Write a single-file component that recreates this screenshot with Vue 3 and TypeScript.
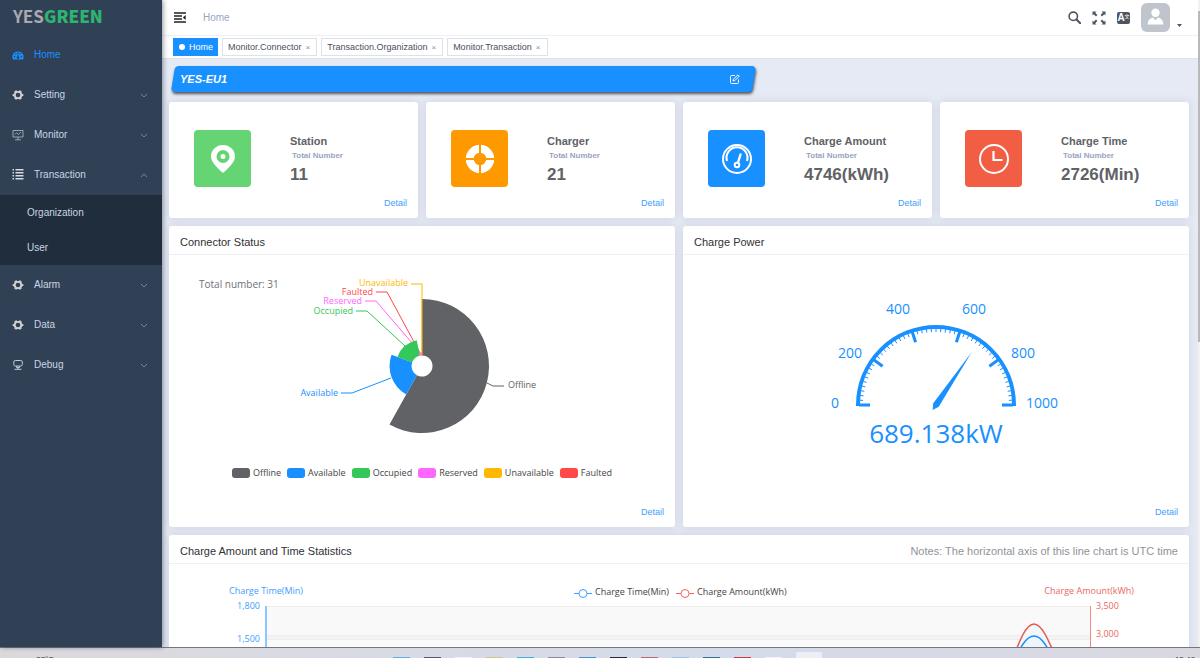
<script setup lang="ts">
import { computed, ref } from 'vue'

interface MenuItem { label: string; icon: string; open?: boolean; children?: string[] }
interface Slice { name: string; value: number; color: string; line: string; x: number; y: number; anchor: 'start' | 'end' }

const menu = ref<MenuItem[]>([
  { label: 'Setting', icon: 'gear' },
  { label: 'Monitor', icon: 'monitor' },
  { label: 'Transaction', icon: 'list', open: true, children: ['Organization', 'User'] },
  { label: 'Alarm', icon: 'gear' },
  { label: 'Data', icon: 'gear' },
  { label: 'Debug', icon: 'debug' },
])

const tags = ['Monitor.Connector', 'Transaction.Organization', 'Monitor.Transaction']

const stats = [
  { title: 'Station', value: '11', icon: 'pin' },
  { title: 'Charger', value: '21', icon: 'ring' },
  { title: 'Charge Amount', value: '4746(kWh)', icon: 'meter' },
  { title: 'Charge Time', value: '2726(Min)', icon: 'clock' },
]

const slices: Slice[] = [
  { name: 'Offline', value: 18, color: '#606266', line: '318,128 324,131 335,131', x: 339, y: 133, anchor: 'start' },
  { name: 'Available', value: 7, color: '#1890ff', line: '172,138 183,138 222,123', x: 169, y: 141, anchor: 'end' },
  { name: 'Occupied', value: 5, color: '#34c759', line: '187,56 198,56 236,91', x: 184, y: 59, anchor: 'end' },
  { name: 'Reserved', value: 1, color: '#ff66ff', line: '196,46 207,46 250,96', x: 193, y: 49, anchor: 'end' },
  { name: 'Unavailable', value: 0, color: '#ffb800', line: '242,29 253,29 253,100', x: 239, y: 31, anchor: 'end' },
  { name: 'Faulted', value: 0, color: '#ff4848', line: '207,37 218,37 251,98', x: 204, y: 40, anchor: 'end' },
]
const total = slices.reduce((sum, s) => sum + s.value, 0)

const pie = computed(() => {
  const cx = 253, cy = 111, inner = 10.5, outer = 67
  const max = Math.max(...slices.map(s => s.value))
  let start = 0
  const point = (r: number, a: number) => `${(cx + r * Math.sin(a)).toFixed(2)} ${(cy - r * Math.cos(a)).toFixed(2)}`
  return slices.filter(s => s.value > 0).map(s => {
    const end = start + (s.value / total) * Math.PI * 2
    const r = inner + (outer - inner) * (s.value / max)
    const large = end - start > Math.PI ? 1 : 0
    const d = `M${point(inner, start)} L${point(r, start)} A${r} ${r} 0 ${large} 1 ${point(r, end)} L${point(inner, end)} A${inner} ${inner} 0 ${large} 0 ${point(inner, start)}Z`
    start = end
    return { name: s.name, color: s.color, d }
  })
})

const ticks = computed(() => Array.from({ length: 51 }, (_, i) => {
  const a = Math.PI * (1 - i / 50)
  const major = i % 10 === 0
  const from = 77, to = major ? 66 : 73
  return {
    major,
    x1: 253 + from * Math.cos(a), y1: 150 - from * Math.sin(a),
    x2: 253 + to * Math.cos(a), y2: 150 - to * Math.sin(a),
  }
}))
const gaugeLabels = [
  { t: '0', x: 152, y: 153 }, { t: '200', x: 167, y: 103 }, { t: '400', x: 215, y: 59 },
  { t: '600', x: 291, y: 59 }, { t: '800', x: 340, y: 103 }, { t: '1000', x: 359, y: 153 },
]
const power = 689.138
const needleAngle = computed(() => (power / 1000) * 180 - 90)

const taskIcons = ['#5fb0e6', '#5a5a60', '#f0f0f5', '#d8c08c', '#3fb6d2', '#8b8d93', '#3f97d6', '#26282e', '#c9606e', '#9cc3ee', '#2f6f9f', '#cf3a34', '#f4f4f6']
</script>

<template>
  <div class="screen">
    <div class="app">
      <aside class="sidebar">
        <div class="logo"><span>YES</span><b>GREEN</b></div>
        <nav>
          <a href="#" class="item active">
            <svg class="ico" viewBox="0 0 12 12"><path d="M1 10.5A5.6 5.6 0 1 1 11 10.5Z" fill="currentColor" /><g fill="#304156"><circle cx="2.6" cy="7.6" r=".8" /><circle cx="3.8" cy="4.7" r=".8" /><circle cx="8.2" cy="4.7" r=".8" /><circle cx="9.4" cy="7.6" r=".8" /><path d="M5.6 3h.8v4.2a1.3 1.3 0 1 1-.8 0Z" /></g></svg>
            <span class="label">Home</span>
          </a>
          <template v-for="m in menu" :key="m.label">
            <button type="button" class="item" :aria-expanded="!!m.open" @click="m.open = !m.open">
              <svg v-if="m.icon === 'gear'" class="ico" viewBox="0 0 12 12"><path d="M4.2 1.3 5.2 2h1.6l1-.7 1.8 1-.1 1.3.8 1.3 1.2.5v1.3l-1.2.5-.8 1.3.1 1.3-1.8 1-1-.7H5.2l-1 .7-1.8-1 .1-1.3-.8-1.3L.5 6.7V5.4l1.2-.5.8-1.3-.1-1.3Z" fill="#cfcfcf" /><circle cx="6" cy="6" r="2.3" fill="#304156" /></svg>
              <svg v-else-if="m.icon === 'monitor'" class="ico" viewBox="0 0 12 12" fill="none" stroke="#b4bccb" stroke-width=".8"><path d="M1 1.500h10v6.500H1ZM6 8v2.500M3 10.800h6M3 5.500l1.700-1.700L6.400 5.500 9 3" /></svg>
              <svg v-else-if="m.icon === 'list'" class="ico" viewBox="0 0 12 12" fill="#d5dae3"><path d="M3.500 0h8v1.500h-8zM3.500 3h8v1.500h-8zM3.500 6h8v1.500h-8zM3.500 9h8v1.500h-8zM.5 0H2v1.500H.5zM.5 3H2v1.500H.5zM.5 6H2v1.500H.5zM.5 9H2v1.500H.5z" /></svg>
              <svg v-else class="ico" viewBox="0 0 12 12" fill="none" stroke="#bfcbd9"><rect x="1.800" y="1.500" width="8.500" height="5.500" rx="1.500" /><path d="M4.500 7v1.500h3V7M6 8v2M2.500 10.300h7" /></svg>
              <span class="label">{{ m.label }}</span>
              <svg class="chev" :class="{ up: m.open }" viewBox="0 0 8 5"><path d="m1 1 3 3 3-3" fill="none" stroke="#7f8b9b" stroke-width=".9" /></svg>
            </button>
            <div v-if="m.open && m.children" class="sub">
              <a v-for="c in m.children" :key="c" href="#">{{ c }}</a>
            </div>
          </template>
        </nav>
      </aside>

      <div class="main">
        <header class="topbar">
          <button type="button" class="plain" aria-label="Collapse menu">
            <svg width="12" height="11" viewBox="0 0 12 11" stroke="#222" stroke-width="1.300"><path d="M0 1h12M0 4h8M0 7h8M0 10h12" /><path d="M11.700 3v5L8.800 5.500Z" fill="#222" stroke="none" /></svg>
          </button>
          <span class="crumb">Home</span>
          <div class="tools">
            <button type="button" class="plain" aria-label="Search">
              <svg width="13" height="13" viewBox="0 0 13 13" fill="none" stroke="#4d5462"><circle cx="5.300" cy="5.300" r="4.200" stroke-width="1.600" /><path d="m8.500 8.500 3.700 3.700" stroke-width="2" stroke-linecap="round" /></svg>
            </button>
            <button type="button" class="plain" aria-label="Full screen">
              <svg width="14" height="14" viewBox="0 0 14 14"><path d="M.5.500h4L3.200 1.800l2.200 2.200-1.400 1.400L1.800 3.200.500 4.500zM13.500.500v4L12.200 3.200 10 5.400 8.600 4l2.200-2.200L9.500.500zM.500 13.500v-4l1.300 1.300L4 8.600 5.400 10l-2.200 2.200 1.300 1.300zM13.500 13.500h-4l1.300-1.300L8.600 10 10 8.600l2.200 2.200 1.300-1.300z" fill="#4d5462" /></svg>
            </button>
            <button type="button" class="plain lang" aria-label="Language">A<sup>文</sup></button>
            <button type="button" class="plain user" aria-label="Account">
              <svg width="29" height="29" viewBox="0 0 29 29"><rect width="29" height="29" rx="6" fill="#c0c4cc" /><circle cx="14.500" cy="9.800" r="4.200" fill="#fff" /><path d="M6.500 21.500c.3-4 2.400-6.500 5.500-7l2.500 3 2.500-3c3.100.5 5.200 3 5.500 7Z" fill="#fff" /></svg>
              <svg class="caret" width="5" height="3" viewBox="0 0 5 3"><path d="M0 0h5L2.500 3Z" fill="#4d5462" /></svg>
            </button>
          </div>
        </header>

        <nav class="tags">
          <a href="#" class="tag on"><i></i>Home</a>
          <a v-for="t in tags" :key="t" href="#" class="tag">{{ t }}<span>×</span></a>
        </nav>

        <main class="content">
          <div class="banner">
            <strong>YES-EU1</strong>
            <button type="button" class="plain" aria-label="Edit station">
              <svg width="11" height="11" viewBox="0 0 11 11" fill="none" stroke="#fff"><path d="M6 1.500H2.500a1 1 0 0 0-1 1v6a1 1 0 0 0 1 1h6a1 1 0 0 0 1-1V5.500M4 7l.4-1.800L9 .8l1.300 1.300-4.500 4.500Z" /></svg>
            </button>
          </div>

          <section class="stats">
            <article v-for="s in stats" :key="s.title" class="card stat">
              <div class="tile" :class="s.icon">
                <svg width="32" height="32" viewBox="0 0 32 32">
                  <template v-if="s.icon === 'pin'"><path d="M16 30C10 24.500 4 19 4 13.500a12 11.500 0 0 1 24 0C28 19 22 24.500 16 30Z" fill="#fff" /><circle cx="16" cy="13.500" r="4.500" fill="none" stroke="#64d572" stroke-width="4" /></template>
                  <template v-else-if="s.icon === 'ring'"><circle cx="16" cy="16" r="10.200" fill="none" stroke="#fff" stroke-width="8" /><path d="M16 1v10M16 21v10M1 16h10M21 16h10" stroke="#ff9900" stroke-width="2" /></template>
                  <template v-else-if="s.icon === 'meter'"><g fill="none" stroke="#fff" stroke-width="2"><circle cx="16" cy="16" r="14" /><path d="M6 18A10.500 10.500 0 1 1 26 18" /><path d="m17 19.500 2.500-8" stroke-width="2.400" stroke-linecap="round" /><circle cx="16" cy="22" r="2.300" /></g></template>
                  <template v-else><circle cx="16" cy="16" r="14" fill="none" stroke="#fff" stroke-width="2" /><path d="M15.500 8v9h9" fill="none" stroke="#fff" stroke-width="2.200" /></template>
                </svg>
              </div>
              <div class="info">
                <h3>{{ s.title }}</h3>
                <small>Total Number</small>
                <strong>{{ s.value }}</strong>
              </div>
              <a href="#" class="detail">Detail</a>
            </article>
          </section>

          <section class="panels">
            <article class="card panel">
              <h2>Connector Status</h2>
              <svg class="chart" viewBox="0 0 506 208">
                <text x="30" y="33" font-size="10" fill="#6e7079">Total number: {{ total }}</text>
                <polyline v-for="s in slices" :key="s.name" :points="s.line" fill="none" :stroke="s.color" />
                <path v-for="p in pie" :key="p.name" :d="p.d" :fill="p.color" />
                <path d="M253 44v57" stroke="#ffb800" />
                <text v-for="s in slices" :key="s.name" :x="s.x" :y="s.y" font-size="9" :fill="s.color" :text-anchor="s.anchor">{{ s.name }}</text>
              </svg>
              <ul class="legend">
                <li v-for="s in slices" :key="s.name"><svg width="18" height="10"><rect width="18" height="10" rx="3" :fill="s.color" /></svg>{{ s.name }}</li>
              </ul>
              <a href="#" class="detail">Detail</a>
            </article>

            <article class="card panel">
              <h2>Charge Power</h2>
              <svg class="chart" viewBox="0 0 506 208" fill="#1890ff">
                <path d="M175 151V150A78 78 0 0 1 331 150v1" fill="none" stroke="#1890ff" stroke-width="4" />
                <line v-for="(t, i) in ticks" :key="i" :x1="t.x1" :y1="t.y1" :x2="t.x2" :y2="t.y2" stroke="#1890ff" :stroke-width="t.major ? 3 : 1" />
                <path d="M253 86 256.300 150 253 156 249.700 150Z" :transform="`rotate(${needleAngle} 253 150)`" />
                <text v-for="g in gaugeLabels" :key="g.t" :x="g.x" :y="g.y" font-size="14" text-anchor="middle">{{ g.t }}</text>
                <text x="253" y="188" font-size="26" text-anchor="middle">{{ power }}kW</text>
              </svg>
              <a href="#" class="detail">Detail</a>
            </article>
          </section>

          <article class="card panel">
            <h2>Charge Amount and Time Statistics <span>Notes: The horizontal axis of this line chart is UTC time</span></h2>
            <svg class="chart" viewBox="-1 0 1020 240" font-size="9">
              <path d="M97 42h823v33H97z" fill="#f9f9f9" />
              <path d="M97 71h823v4H97z" fill="#f3f3f3" />
              <path d="M97 75h823v33H97z" fill="#fafafa" />
              <path d="M97 42.500h823M97 71.500h823M97 75.500h823" stroke="#eee" />
              <path d="M96 42v180" stroke="#8cc8ff" stroke-width="2" />
              <path d="M920.500 42v180" stroke="#f08a84" />
              <path d="M838 110C850 72 857 60 864 60S878 72 892 110Z" fill="#f3f7fc" stroke="#e8564e" stroke-width="1.500" />
              <path d="M838 110C851 80 857 72 864 72S877 80 890 110" fill="#eef5fd" stroke="#1890ff" stroke-width="1.500" />
              <g fill="#409eff">
                <text x="59" y="30">Charge Time(Min)</text>
                <text x="90" y="45" text-anchor="end">1,800</text>
                <text x="90" y="78" text-anchor="end">1,500</text>
              </g>
              <g fill="#ee6660">
                <text x="964" y="30" text-anchor="end">Charge Amount(kWh)</text>
                <text x="926" y="45">3,500</text>
                <text x="926" y="73">3,000</text>
              </g>
              <g fill="#fff"><path d="M404 29.500h18" stroke="#409eff" /><circle cx="413" cy="29.500" r="4" stroke="#409eff" /><path d="M506 29.500h18" stroke="#ee6660" /><circle cx="515" cy="29.500" r="4" stroke="#ee6660" /></g>
              <g fill="#444"><text x="425" y="31">Charge Time(Min)</text><text x="527" y="31">Charge Amount(kWh)</text></g>
            </svg>
          </article>
        </main>
        <div class="scroll"><i></i></div>
      </div>
    </div>
    <footer class="taskbar">
      <span>27°C</span>
      <div><svg v-for="c in taskIcons" :key="c" width="17" height="1"><rect width="17" height="1" :fill="c" /></svg><b></b></div>
      <span>15:48</span>
    </footer>
  </div>
</template>

<style>
body { margin: 0; overflow: hidden; }
</style>

<style scoped>
* { box-sizing: border-box; }
a { text-decoration: none; color: inherit; }
button { font: inherit; color: inherit; cursor: pointer; }
.screen { height: 100vh; display: flex; flex-direction: column; overflow: hidden; font: 10px/16px "Liberation Sans", Arial, sans-serif; color: #303133; }
.app { flex: 1; min-height: 0; display: flex; }
.plain { border: 0; padding: 0; background: none; display: flex; align-items: center; }

.sidebar { width: 162px; flex: none; background: #304156; color: #c9d5e4; box-shadow: 1px 0 5px rgba(0, 21, 41, .45); z-index: 1; overflow: hidden; }
.logo { height: 35px; padding: 0 0 4px 13px; display: flex; align-items: center; font: bold 17px/32px "Noto Sans CJK SC", "Liberation Sans", sans-serif; color: #a9a9ae; }
.logo b { color: #2db56f; }
.item { display: flex; align-items: center; width: 100%; height: 40px; padding: 0 14px 0 12px; border: 0; background: none; text-align: left; }
.item.active { color: #1890ff; }
.ico { width: 12px; height: 12px; flex: none; }
.label { flex: 1; padding-left: 10px; }
.chev { width: 8px; height: 5px; }
.chev.up { transform: rotate(180deg); }
.sub { background: #1f2d3d; }
.sub a { display: block; height: 35px; line-height: 35px; padding-left: 27px; }

.main { flex: 1; min-width: 0; display: flex; flex-direction: column; position: relative; background: #e6eaf4; padding-right: 2px; }
.topbar { flex: none; height: 36px; background: #fff; border-bottom: 1px solid #eef0f3; padding: 0 16px 0 12px; display: flex; align-items: center; }
.crumb { margin-left: 17px; color: #97a8be; }
.tools { margin-left: auto; display: flex; align-items: center; gap: 11px; }
.lang { width: 13px; height: 12px; border-radius: 2px; background: #4d5462; color: #fff; font-size: 10px; font-weight: bold; line-height: 12px; justify-content: center; }
.lang sup { font: 5px/8px "Noto Sans CJK SC", sans-serif; align-self: flex-start; }
.user { gap: 7px; }
.caret { align-self: flex-end; margin-bottom: 5px; }

.tags { flex: none; height: 23px; padding: 2px 11px; background: #fff; display: flex; gap: 4px; border-bottom: 1px solid #dfe3ea; }
.tag { height: 18px; padding: 0 6px 0 5px; border: 1px solid #dde1e8; font-size: 9px; line-height: 17px; color: #495060; display: flex; align-items: center; }
.tag span { margin-left: 4px; color: #8a8f99; font-size: 8px; }
.tag.on { background: #1890ff; border-color: #1890ff; color: #fff; padding: 0 4px 0 5px; }
.tag i { width: 6px; height: 6px; border-radius: 50%; background: #fff; margin-right: 4px; }

.content { flex: 1; min-height: 0; overflow: hidden; padding: 7px 9px 0 7px; display: flex; flex-direction: column; gap: 8px; }
.content > * { flex: none; }
.banner { position: relative; z-index: 0; width: 57%; height: 26px; margin: 0 0 2px 4px; padding: 0 14px 0 7px; display: flex; align-items: center; justify-content: space-between; color: #fff; font-size: 11px; font-style: italic; }
.banner::before { content: ""; position: absolute; inset: 0; z-index: -1; background: #1890ff; border-radius: 4px; transform: skewX(-9deg); box-shadow: 1px 2px 3px rgba(0, 0, 0, .65); }

.card { background: #fff; border-radius: 3px; box-shadow: 0 0 8px rgba(120, 130, 165, .22); }
.stats { display: grid; grid-template-columns: repeat(4, 1fr); gap: 8px; }
.stat { position: relative; height: 116px; padding: 28px 10px 0 25px; display: flex; align-items: flex-start; gap: 39px; }
.tile { width: 57px; height: 57px; border-radius: 4px; display: grid; place-items: center; flex: none; }
.pin { background: #64d572; }
.ring { background: #ff9900; }
.meter { background: #1890ff; }
.clock { background: #f25e43; }
.info { padding-top: 3px; display: flex; flex-direction: column; color: #606266; }
.info h3 { margin: 0; font-size: 11px; line-height: 16px; }
.info small { padding-left: 2px; font-size: 8px; line-height: 13px; font-weight: bold; color: #99a3c0; }
.info strong { font-size: 17px; line-height: 25px; }
.detail { color: #409eff; font-size: 9px; line-height: 11px; }
.stat .detail { position: absolute; right: 11px; bottom: 9px; }

.panels { display: grid; grid-template-columns: 1fr 1fr; gap: 8px; }
.panel { display: flex; flex-direction: column; min-width: 0; }
.panels .panel { min-height: 301px; }
.panel h2 { margin: 0; height: 29px; padding: 4px 11px 0; border-bottom: 1px solid #eef0f5; display: flex; align-items: center; justify-content: space-between; font-size: 11px; font-weight: normal; line-height: 16px; }
.panel h2 span { color: #909399; }
.panel .detail { margin: auto 11px 9px auto; }
.chart { display: block; width: 100%; font-family: "Open Sans", "Noto Sans", sans-serif; }
.legend { list-style: none; margin: 3px 0 0; padding: 0; display: flex; justify-content: center; gap: 6px; font: 9px/14px "Open Sans", "Noto Sans", sans-serif; color: #444; }
.legend li { display: flex; align-items: center; gap: 3px; }

.scroll { position: absolute; right: 0; top: 0; bottom: 0; width: 2px; background: #f1f1f1; padding-top: 11px; }
.scroll i { display: block; height: 52%; background: #b9b9bb; }

.taskbar { flex: none; height: 11px; overflow: hidden; border-top: 1px solid #74777d; background: linear-gradient(90deg, #dcd9dd, #d5dbea 60%, #d9d8e0); padding: 0 5px 0 36px; display: flex; justify-content: space-between; color: #333; font-size: 8px; }
.taskbar span { padding-top: 4px; width: 20px; }
.taskbar div { display: flex; align-items: flex-end; gap: 14px; padding-right: 16px; }
.taskbar svg { display: block; }
.taskbar b { width: 26px; height: 6px; border-radius: 2px 2px 0 0; background: #eeeff5; }
</style>
